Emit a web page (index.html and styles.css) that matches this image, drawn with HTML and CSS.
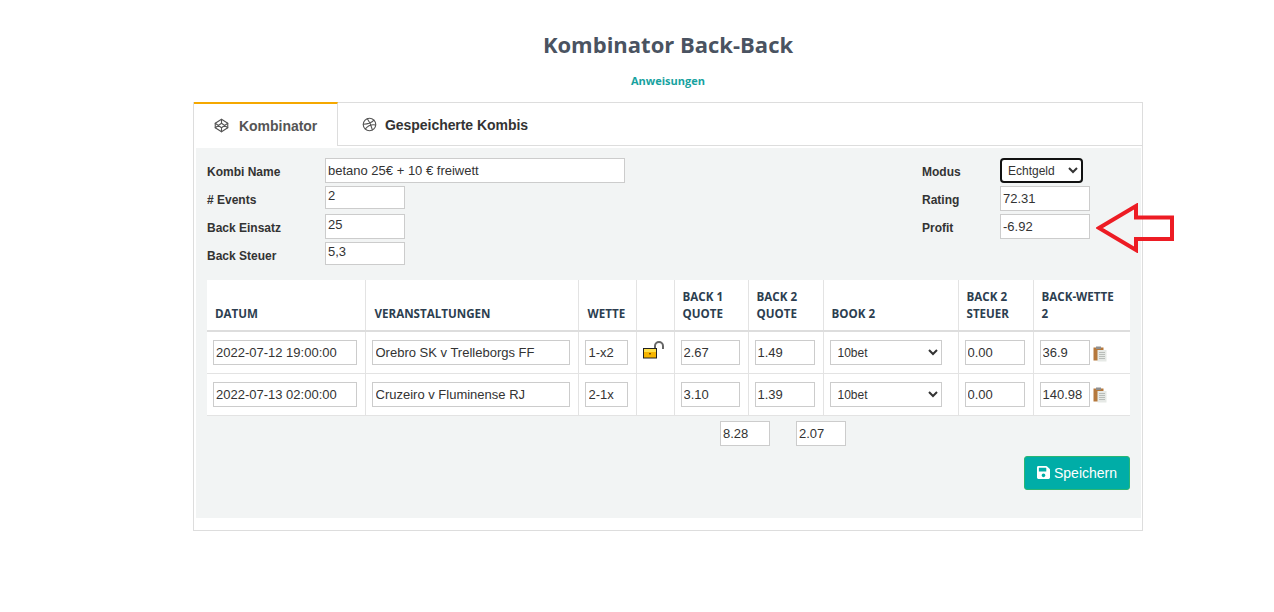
FILE: index.html
```html
<!DOCTYPE html>
<html>
<head>
  <title>Kombinator Back-Back</title>
  <link rel="stylesheet" href="styles.css">
</head>
<body>
  <div class="page">
    <h1>Kombinator Back-Back</h1>
    <a class="help-link" href="#">Anweisungen</a>

    <div class="card">
      <div class="tabs">
        <div class="tab active">
          <svg class="tab-icon" viewBox="0 0 24 24"><path d="M12 2l10 6.5v7L12 22 2 15.5v-7L12 2z"/><path d="M12 22v-6.5M22 8.5l-10 7-10-7M2 15.5l10-7 10 7M12 2v6.5"/></svg>
          Kombinator
        </div>
        <div class="tab">
          <svg class="tab-icon" viewBox="0 0 24 24"><circle cx="12" cy="12" r="10"/><path d="M8.56 2.75c4.37 6.03 6.02 9.42 8.03 17.72M19.13 5.09c-3.5 4.26-7.9 6.2-16.94 6.5M21.75 12.84c-6.62-1.41-12.14 1-16.38 6.32"/></svg>
          Gespeicherte Kombis
        </div>
      </div>

      <div class="panel">
        <div class="form-head">
          <div class="fields fields-left">
            <label>Kombi Name</label>
            <input class="input w-name h-tall" value="betano 25€ + 10 € freiwett">
            <label># Events</label>
            <input class="input w-short" value="2">
            <label>Back Einsatz</label>
            <input class="input w-short h-tall" value="25">
            <label>Back Steuer</label>
            <input class="input w-short" value="5,3">
          </div>
          <div class="fields fields-right">
            <label>Modus</label>
            <select class="mode-select"><option>Echtgeld</option></select>
            <label>Rating</label>
            <input class="input w-short-r h-tall" value="72.31">
            <label>Profit</label>
            <input class="input w-short-r h-tall" value="-6.92">
          </div>
        </div>

        <svg class="red-arrow" viewBox="0 0 80 50">
          <path d="M3 25 L40 3 V14.5 H76 V36 H40 V47 Z"/>
        </svg>

        <table class="bets">
          <colgroup>
            <col class="c-date"><col class="c-event"><col class="c-bet"><col class="c-lock"><col class="c-q1"><col class="c-q2"><col class="c-book"><col class="c-tax"><col class="c-stake">
          </colgroup>
          <thead>
            <tr>
              <th>Datum</th>
              <th class="th-wide">Veranstaltungen</th>
              <th class="th-wide">Wette</th>
              <th></th>
              <th>Back 1 Quote</th>
              <th>Back 2 Quote</th>
              <th>Book 2</th>
              <th>Back 2 Steuer</th>
              <th>Back-Wette 2</th>
            </tr>
          </thead>
          <tbody>
            <tr>
              <td><input class="input w-date" value="2022-07-12 19:00:00"></td>
              <td><input class="input w-event" value="Orebro SK v Trelleborgs FF"></td>
              <td><input class="input w-bet" value="1-x2"></td>
              <td>
                <svg class="lock" viewBox="0 0 22 20"><path class="shackle" d="M12 9V5a4 4 0 0 1 8 0v3"/><rect class="lock-body" x="0.5" y="7.5" width="13" height="9.5"/><rect class="lock-top" x="1" y="8" width="12" height="3"/><rect class="lock-hole" x="6" y="12" width="2" height="1.4"/></svg>
              </td>
              <td><input class="input w-q1" value="2.67"></td>
              <td><input class="input w-q2" value="1.49"></td>
              <td><select class="book-select"><option>10bet</option></select></td>
              <td><input class="input w-tax" value="0.00"></td>
              <td class="stake-cell">
                <input class="input w-stake" value="36.9">
                <svg class="clip" viewBox="0 0 14 16"><rect class="clip-board" x="0.5" y="1.5" width="10" height="13"/><rect class="clip-top" x="3" y="0.5" width="5" height="2.5"/><rect class="clip-paper" x="4.5" y="4" width="9" height="11.5"/><path class="clip-lines" d="M6 6.5h6M6 8.5h6M6 10.5h6M6 12.5h6"/></svg>
              </td>
            </tr>
            <tr>
              <td><input class="input w-date" value="2022-07-13 02:00:00"></td>
              <td><input class="input w-event" value="Cruzeiro v Fluminense RJ"></td>
              <td><input class="input w-bet" value="2-1x"></td>
              <td></td>
              <td><input class="input w-q1" value="3.10"></td>
              <td><input class="input w-q2" value="1.39"></td>
              <td><select class="book-select"><option>10bet</option></select></td>
              <td><input class="input w-tax" value="0.00"></td>
              <td class="stake-cell">
                <input class="input w-stake" value="140.98">
                <svg class="clip" viewBox="0 0 14 16"><rect class="clip-board" x="0.5" y="1.5" width="10" height="13"/><rect class="clip-top" x="3" y="0.5" width="5" height="2.5"/><rect class="clip-paper" x="4.5" y="4" width="9" height="11.5"/><path class="clip-lines" d="M6 6.5h6M6 8.5h6M6 10.5h6M6 12.5h6"/></svg>
              </td>
            </tr>
          </tbody>
        </table>

        <div class="totals">
          <input class="input w-total h-tall" value="8.28">
          <input class="input w-total h-tall" value="2.07">
        </div>

        <div class="actions">
          <button class="save-button">
            <svg class="save-icon" viewBox="0 0 448 512"><path d="M433.941 129.941l-83.882-83.882A48 48 0 0 0 316.118 32H48C21.49 32 0 53.49 0 80v352c0 26.51 21.49 48 48 48h352c26.51 0 48-21.49 48-48V163.882a48 48 0 0 0-14.059-33.941zM224 416c-35.346 0-64-28.654-64-64 0-35.346 28.654-64 64-64s64 28.654 64 64c0 35.346-28.654 64-64 64zm96-304.52V212c0 6.627-5.373 12-12 12H76c-6.627 0-12-5.373-12-12V108c0-6.627 5.373-12 12-12h228.52c3.183 0 6.235 1.264 8.485 3.515l3.48 3.48A11.996 11.996 0 0 1 320 111.48z"/></svg>
            Speichern
          </button>
        </div>
      </div>
    </div>
  </div>
</body>
</html>
```

FILE: styles.css
```css
* {
  box-sizing: border-box;
}

body {
  font-family: "Liberation Sans", Arial, sans-serif;
  font-size: 12px;
  color: #333;
  margin: 0;
  background-color: #fff;
}

.page {
  width: 950px;
  margin-left: 193px;
  padding-top: 29px;
}

h1 {
  font-family: "Open Sans", sans-serif;
  font-size: 22px;
  line-height: 30px;
  font-weight: 700;
  color: #4a5361;
  text-align: center;
  margin: 0;
}

.help-link {
  display: block;
  font-family: "Open Sans", sans-serif;
  font-size: 11px;
  line-height: 16px;
  font-weight: 700;
  color: #17a2a0;
  text-align: center;
  text-decoration: none;
  margin-top: 14px;
}

.card {
  margin-top: 13px;
  height: 429px;
  border: 1px solid #ddd;
  position: relative;
}

/* Tabs */
.tabs {
  display: flex;
  height: 43px;
  border-bottom: 1px solid #ddd;
}

.tab {
  display: flex;
  align-items: center;
  font-size: 14px;
  font-weight: 700;
  color: #333;
  padding-left: 24px;
  padding-top: 1px;
  letter-spacing: -0.05px;
}

.tab.active {
  width: 144px;
  padding-left: 20px;
  color: #555;
  background-color: #fff;
  border-top: 2px solid #f5a800;
  border-right: 1px solid #ddd;
  margin-top: -1px;
  height: 44px;
  letter-spacing: -0.03px;
}

.tab-icon {
  width: 15px;
  height: 15px;
  margin-right: 9px;
  fill: none;
  stroke: #555;
  stroke-width: 1.8;
  stroke-linejoin: round;
  stroke-linecap: round;
}

.tab.active .tab-icon {
  margin-right: 10px;
}

.tab:not(.active) .tab-icon {
  margin-right: 8px;
}

/* Gray panel */
.panel {
  position: relative;
  margin: 2px 1px 0 2px;
  padding: 10px 11px 28px 11px;
  height: 370px;
  background-color: #f2f4f4;
}

.form-head {
  display: flex;
  justify-content: space-between;
  padding-right: 40px;
}

.fields {
  display: grid;
  grid-auto-rows: 28px;
  align-items: start;
}

.fields-left {
  grid-template-columns: 118px auto;
}

.fields-right {
  grid-template-columns: 78px auto;
}

.fields label {
  font-size: 12px;
  font-weight: 700;
  line-height: 28px;
  color: #333;
}

.input {
  height: 23px;
  padding: 0 2px;
  border: 1px solid #ccc;
  background-color: #fff;
  font-family: "Liberation Sans", Arial, sans-serif;
  font-size: 13px;
  color: #333;
  border-radius: 0;
  outline: none;
}

.h-tall {
  height: 25px;
}

.w-name { width: 300px; }
.w-short { width: 80px; padding-bottom: 4px; }
.w-short-r { width: 90px; }
.w-date { width: 144px; height: 25px; }
.w-event { width: 198px; height: 25px; padding-left: 3px; }
.w-bet { width: 43px; height: 25px; padding-left: 3px; }
.w-q1 { width: 59px; height: 25px; }
.w-q2 { width: 60px; height: 25px; }
.w-tax { width: 60px; height: 25px; }
.w-stake { width: 50px; height: 25px; }
.w-total { width: 50px; }

.mode-select {
  width: 83px;
  height: 25px;
  border: 2px solid #111;
  border-radius: 4px;
  background-color: #fff;
  font-family: "Liberation Sans", Arial, sans-serif;
  font-size: 12px;
  color: #333;
  padding-left: 2px;
}

.red-arrow {
  position: absolute;
  left: 900px;
  top: 55px;
  width: 80px;
  height: 50px;
  fill: none;
  stroke: #ed1c24;
  stroke-width: 4;
}

/* Table */
.bets {
  width: 923px;
  margin-top: 10px;
  border-collapse: collapse;
  table-layout: fixed;
  background-color: #fff;
}

.c-date { width: 158px; }
.c-event { width: 213px; }
.c-bet { width: 58px; }
.c-lock { width: 38px; }
.c-q1 { width: 74px; }
.c-q2 { width: 75px; }
.c-book { width: 135px; }
.c-tax { width: 75px; }
.c-stake { width: 97px; }

.bets th {
  font-family: "Open Sans", sans-serif;
  font-size: 11.6px;
  line-height: 17px;
  font-weight: 700;
  text-transform: uppercase;
  text-align: left;
  vertical-align: bottom;
  color: #2c3e50;
  height: 51px;
  padding: 0 8px 8px 8px;
  border-right: 1px solid #e3e3e3;
  border-bottom: 2px solid #ddd;
}

.bets th.th-wide {
  padding-left: 9px;
}

.bets td {
  height: 42px;
  padding: 0 6px;
  border-right: 1px solid #e3e3e3;
  border-bottom: 1px solid #e3e3e3;
}

.bets th:last-child,
.bets td:last-child {
  border-right: none;
}

.stake-cell {
  white-space: nowrap;
}

.book-select {
  width: 112px;
  height: 25px;
  border: 1px solid #ccc;
  border-radius: 0;
  background-color: #fff;
  font-family: "Liberation Sans", Arial, sans-serif;
  font-size: 12px;
  color: #333;
  padding: 1px 0 0 3px;
}

/* Small icons */
.lock {
  display: block;
  width: 22px;
  height: 20px;
  margin: -3px 0 0 0;
}

.shackle {
  fill: none;
  stroke: #666;
  stroke-width: 2;
}

.lock-body {
  fill: #f7b500;
  stroke: #222;
  stroke-width: 1;
}

.lock-top {
  fill: #ffe04a;
}

.lock-hole {
  fill: #7a4a00;
}

.clip {
  width: 14px;
  height: 16px;
  vertical-align: middle;
}

.clip-board {
  fill: #b5783c;
}

.clip-top {
  fill: #8f8f8f;
}

.clip-paper {
  fill: #e6e9e6;
}

.clip-lines {
  fill: none;
  stroke: #b9bdb9;
  stroke-width: 1;
}

/* Below the table */
.totals {
  display: flex;
  gap: 26px;
  margin-top: 5px;
  padding-left: 513px;
}

.actions {
  display: flex;
  justify-content: flex-end;
  margin-top: 10px;
}

.save-button {
  display: flex;
  align-items: center;
  justify-content: center;
  width: 106px;
  height: 34px;
  background-color: #00ada7;
  color: white;
  border: 1px solid #2bb673;
  border-radius: 3px;
  font-family: "Liberation Sans", Arial, sans-serif;
  font-size: 14px;
  cursor: pointer;
}

.save-icon {
  width: 13px;
  height: 15px;
  margin-right: 4px;
  fill: #fff;
}
```
